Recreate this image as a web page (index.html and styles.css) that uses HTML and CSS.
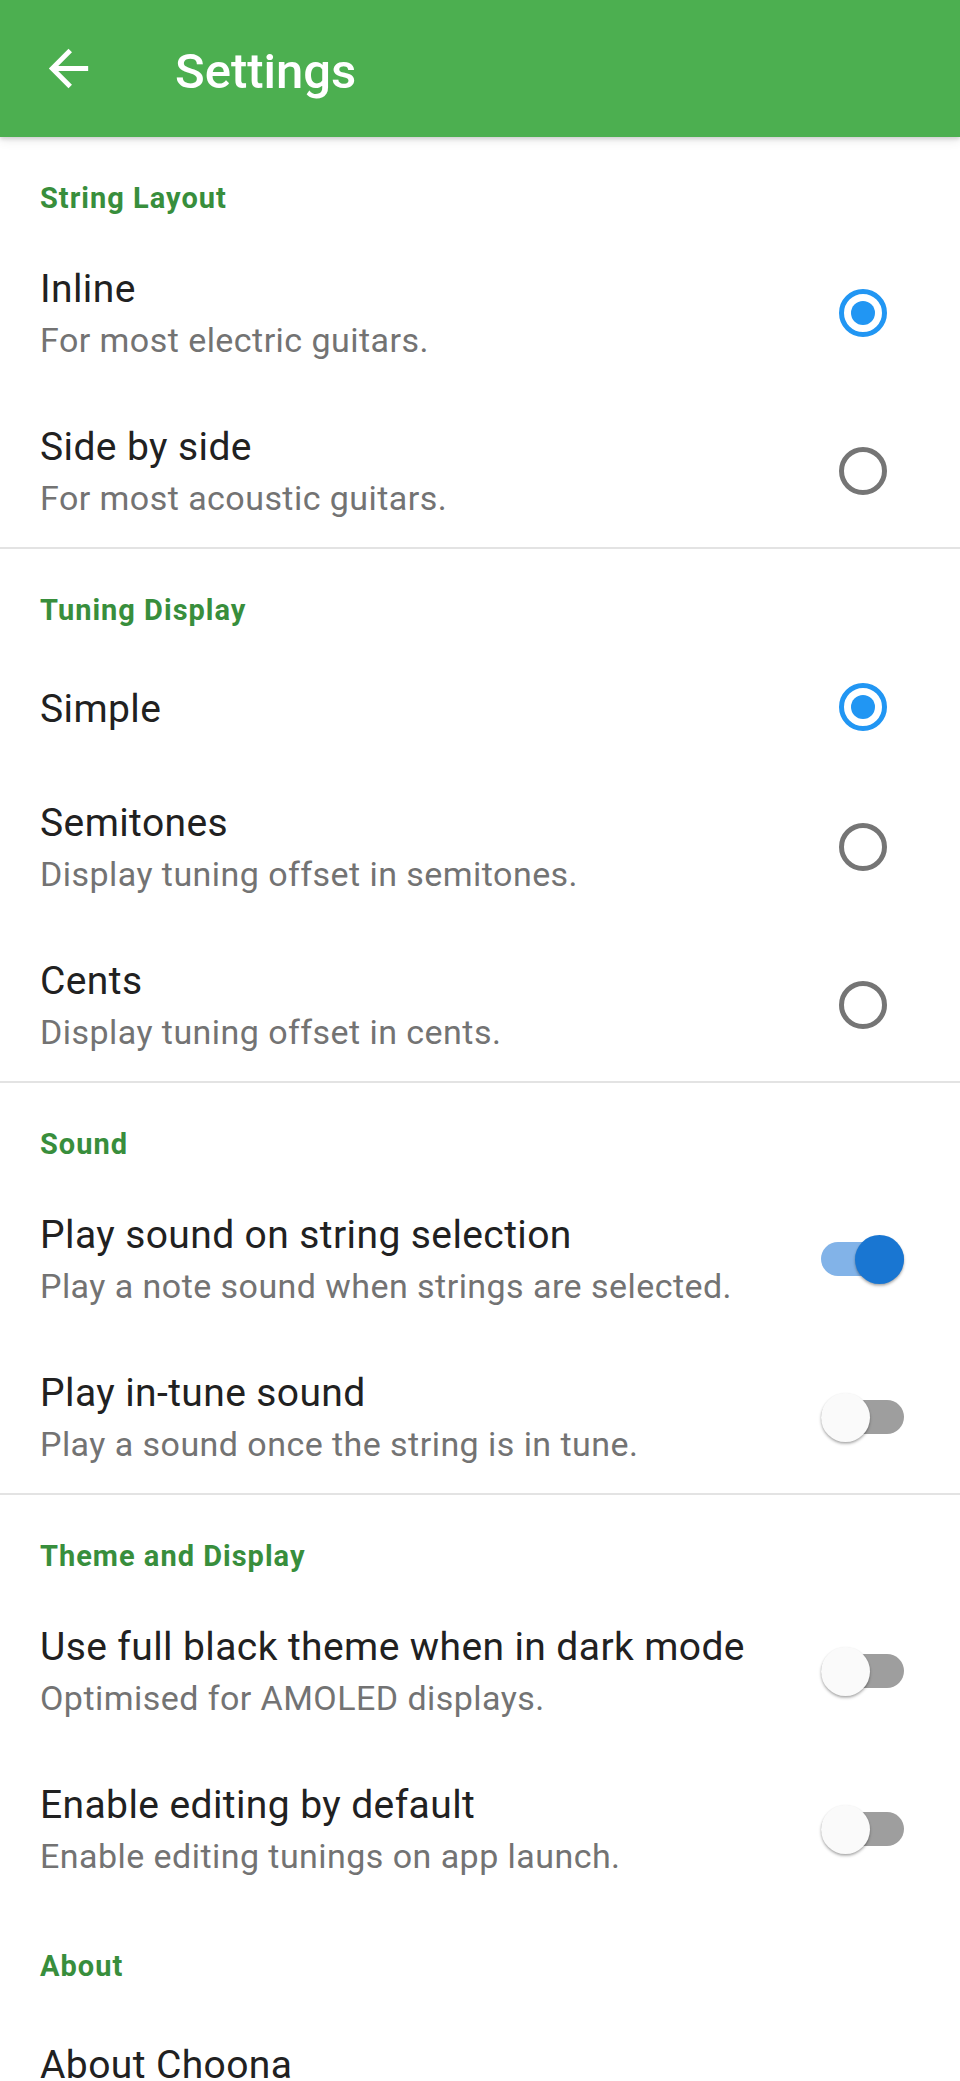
FILE: index.html
```html
<!DOCTYPE html>
<html lang="en">
<head>
<meta charset="utf-8">
<title>Settings</title>
<link rel="stylesheet" href="styles.css">
</head>
<body>
<header class="appbar">
  <span class="nav-icon" aria-label="Back">
    <svg viewBox="0 0 24 24" width="59" height="59"><path fill="#ffffff" d="M20 11H7.83l5.59-5.59L12 4l-8 8 8 8 1.41-1.41L7.83 13H20v-2z"/></svg>
  </span>
  <h1 class="appbar-title">Settings</h1>
</header>

<main class="prefs">
  <section class="group">
    <h2 class="category">String Layout</h2>
    <div class="pref">
      <div class="pref-text"><div class="pref-title">Inline</div><div class="pref-summary">For most electric guitars.</div></div>
      <div class="widget"><span class="radio on"></span></div>
    </div>
    <div class="pref">
      <div class="pref-text"><div class="pref-title">Side by side</div><div class="pref-summary">For most acoustic guitars.</div></div>
      <div class="widget"><span class="radio"></span></div>
    </div>
  </section>

  <section class="group">
    <h2 class="category">Tuning Display</h2>
    <div class="pref single">
      <div class="pref-text"><div class="pref-title">Simple</div></div>
      <div class="widget"><span class="radio on"></span></div>
    </div>
    <div class="pref">
      <div class="pref-text"><div class="pref-title">Semitones</div><div class="pref-summary">Display tuning offset in semitones.</div></div>
      <div class="widget"><span class="radio"></span></div>
    </div>
    <div class="pref">
      <div class="pref-text"><div class="pref-title">Cents</div><div class="pref-summary">Display tuning offset in cents.</div></div>
      <div class="widget"><span class="radio"></span></div>
    </div>
  </section>

  <section class="group">
    <h2 class="category">Sound</h2>
    <div class="pref">
      <div class="pref-text"><div class="pref-title">Play sound on string selection</div><div class="pref-summary">Play a note sound when strings are selected.</div></div>
      <div class="widget"><span class="switch on"><span class="thumb"></span></span></div>
    </div>
    <div class="pref">
      <div class="pref-text"><div class="pref-title">Play in-tune sound</div><div class="pref-summary">Play a sound once the string is in tune.</div></div>
      <div class="widget"><span class="switch"><span class="thumb"></span></span></div>
    </div>
  </section>

  <section class="group no-divider">
    <h2 class="category">Theme and Display</h2>
    <div class="pref">
      <div class="pref-text"><div class="pref-title">Use full black theme when in dark mode</div><div class="pref-summary">Optimised for AMOLED displays.</div></div>
      <div class="widget"><span class="switch"><span class="thumb"></span></span></div>
    </div>
    <div class="pref">
      <div class="pref-text"><div class="pref-title">Enable editing by default</div><div class="pref-summary">Enable editing tunings on app launch.</div></div>
      <div class="widget"><span class="switch"><span class="thumb"></span></span></div>
    </div>
  </section>

  <section class="group no-divider">
    <h2 class="category">About</h2>
    <div class="pref single">
      <div class="pref-text"><div class="pref-title">About Choona</div></div>
    </div>
  </section>
</main>
</body>
</html>
```

FILE: styles.css
```css
* { box-sizing: border-box; }

html, body {
  margin: 0;
  padding: 0;
  background: #ffffff;
}

body {
  font-family: Roboto, "Noto Sans", "Liberation Sans", sans-serif;
  color: #212121;
  overflow: hidden;
}

.appbar {
  position: relative;
  z-index: 2;
  height: 137px;
  background: #4caf50;
  display: flex;
  align-items: center;
  padding-left: 39px;
  box-shadow: 0 2px 4px rgba(0, 0, 0, 0.14), 0 4px 10px rgba(0, 0, 0, 0.08);
}

.nav-icon {
  display: flex;
  width: 59px;
  height: 59px;
}

.appbar-title {
  margin: 0 0 0 77px;
  padding-top: 5px;
  font-size: 49px;
  font-weight: 500;
  color: #ffffff;
  line-height: normal;
}

.prefs {
  display: flex;
  flex-direction: column;
}

.group {
  border-bottom: 2px solid #e3e3e3;
}

.group.no-divider {
  border-bottom: none;
}

.category {
  margin: 0;
  padding: 44px 40px 16px;
  font-size: 29px;
  line-height: 34px;
  font-weight: 700;
  letter-spacing: 1px;
  color: #388e3c;
}

.pref {
  display: flex;
  align-items: center;
  min-height: 158px;
  padding: 0 56px 0 40px;
}

.pref.single {
  min-height: 122px;
}

.pref-text {
  flex: 1;
  padding: 35px 0 26px;
}

.pref.single .pref-text {
  padding: 43px 0 33px;
}

.pref-title {
  font-size: 39px;
  line-height: 46px;
  color: #212121;
  letter-spacing: 0.4px;
}

.pref-summary {
  margin-top: 5px;
  font-size: 34px;
  line-height: 46px;
  color: #737373;
  letter-spacing: 0.45px;
}

.widget {
  width: 83px;
  padding-top: 6px;
  display: flex;
  justify-content: center;
  align-items: center;
}

.radio {
  width: 48px;
  height: 48px;
  border-radius: 50%;
  border: 5px solid #757575;
  display: flex;
  align-items: center;
  justify-content: center;
}

.radio.on {
  border-color: #2196f3;
}

.radio.on::after {
  content: "";
  width: 24px;
  height: 24px;
  border-radius: 50%;
  background: #2196f3;
}

.switch {
  position: relative;
  width: 83px;
  height: 49px;
  display: flex;
  align-items: center;
}

.switch::before {
  content: "";
  width: 83px;
  height: 34px;
  border-radius: 17px;
  background: #9e9e9e;
}

.switch.on::before {
  background: #82b3e8;
}

.thumb {
  position: absolute;
  top: 0;
  left: 0;
  width: 49px;
  height: 49px;
  border-radius: 50%;
  background: #fafafa;
  box-shadow: 0 2px 3px rgba(0, 0, 0, 0.25), 0 1px 2px rgba(0, 0, 0, 0.12);
}

.switch.on .thumb {
  left: auto;
  right: 0;
  background: #1976d2;
}
```
